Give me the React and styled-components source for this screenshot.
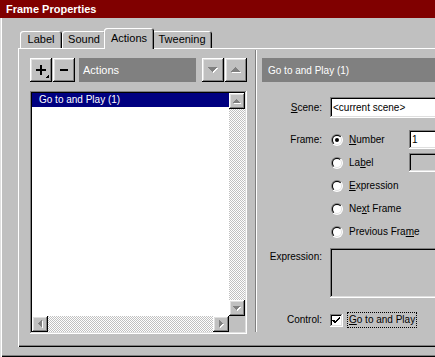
import React, { useId } from 'react';
import styled, { createGlobalStyle } from 'styled-components';

// Win98 bevels
const raised =
  'box-shadow: inset -1px -1px #000, inset 1px 1px #fff, inset -2px -2px #808080, inset 2px 2px #dfdfdf;';
const sunken =
  'box-shadow: inset -1px -1px #fff, inset 1px 1px #808080, inset -2px -2px #dfdfdf, inset 2px 2px #000;';

const GlobalStyle = createGlobalStyle`
  html, body {
    margin: 0;
    padding: 0;
    background: #c0c0c0;
    overflow: hidden;
  }
  body {
    font-family: "Liberation Sans", Arial, sans-serif;
    font-size: 10px;
    color: #000;
  }
`;

const tabs = [
  { name: 'Label', width: 42 },
  { name: 'Sound', width: 44 },
  { name: 'Actions', width: 50, active: true },
  { name: 'Tweening', width: 60 },
];

const frameOptions = [
  { pre: '', key: 'N', post: 'umber', checked: true, field: { value: '1', bg: '#fff' } },
  { pre: 'La', key: 'b', post: 'el', field: { value: '', bg: '#c0c0c0' } },
  { pre: '', key: 'E', post: 'xpression' },
  { pre: 'Ne', key: 'x', post: 't Frame' },
  { pre: 'Previous Fra', key: 'm', post: 'e' },
];

// Small disabled-looking triangle (gray with white emboss)
const Arrow = ({ dir, w = 7, h = 4 }) => {
  const horizontal = dir === 'left' || dir === 'right';
  const W = horizontal ? h : w;
  const H = horizontal ? w : h;
  const pts = {
    up: `${w / 2},0 ${w},${h} 0,${h}`,
    down: `0,0 ${w},0 ${w / 2},${h}`,
    left: `${h},0 ${h},${w} 0,${w / 2}`,
    right: `0,0 ${h},${w / 2} 0,${w}`,
  }[dir];
  return (
    <svg width={W + 1} height={H + 1} viewBox={`0 0 ${W + 1} ${H + 1}`} shapeRendering='crispEdges'>
      <polygon points={pts} fill='#fff' transform='translate(1 1)' />
      <polygon points={pts} fill='#808080' />
    </svg>
  );
};

const Radio = ({ checked }) => {
  const id = useId().replace(/:/g, '');
  return (
    <svg width='12' height='12' viewBox='0 0 12 12'>
      <defs>
        <linearGradient id={`o${id}`} x1='0' y1='0' x2='1' y2='1'>
          <stop offset='0.5' stopColor='#808080' />
          <stop offset='0.5' stopColor='#fff' />
        </linearGradient>
        <linearGradient id={`i${id}`} x1='0' y1='0' x2='1' y2='1'>
          <stop offset='0.5' stopColor='#000' />
          <stop offset='0.5' stopColor='#dfdfdf' />
        </linearGradient>
      </defs>
      <circle cx='6' cy='6' r='6' fill={`url(#o${id})`} />
      <circle cx='6' cy='6' r='5' fill={`url(#i${id})`} />
      <circle cx='6' cy='6' r='4' fill='#fff' />
      {checked && <circle cx='6' cy='6' r='2' fill='#000' />}
    </svg>
  );
};

const App = () => {
  return (
    <>
      <GlobalStyle />
      <Window>
        <TitleBar>Frame Properties</TitleBar>

        <TabStrip>
          {tabs.map((tab) => (
            <Tab key={tab.name} $active={tab.active} $width={tab.width}>
              {tab.name}
            </Tab>
          ))}
        </TabStrip>

        <Panel>
          <LeftColumn>
            <Toolbar>
              <ButtonPair>
                <ToolButton>
                  <svg width='22' height='24' viewBox='0 0 22 24' shapeRendering='crispEdges'>
                    <rect x='6' y='11' width='10' height='2' fill='#000' />
                    <rect x='10' y='7' width='2' height='10' fill='#000' />
                    <polygon points='19,16 19,20 15,20' fill='#000' />
                  </svg>
                </ToolButton>
                <ToolButton>
                  <svg width='22' height='24' viewBox='0 0 22 24' shapeRendering='crispEdges'>
                    <rect x='7' y='11' width='8' height='2' fill='#000' />
                  </svg>
                </ToolButton>
              </ButtonPair>
              <CaptionBar $size={11} $width={117}>
                Actions
              </CaptionBar>
              <ButtonPair>
                <ToolButton>
                  <Arrow dir='down' w={9} h={5} />
                </ToolButton>
                <ToolButton>
                  <Arrow dir='up' w={9} h={5} />
                </ToolButton>
              </ButtonPair>
            </Toolbar>

            <ListBox>
              <ListInner>
                <ListItems>
                  <ListRow $selected>Go to and Play (1)</ListRow>
                </ListItems>
                <VScroll>
                  <ScrollButton>
                    <Arrow dir='up' />
                  </ScrollButton>
                  <Track />
                  <ScrollButton>
                    <Arrow dir='down' />
                  </ScrollButton>
                </VScroll>
                <HScroll>
                  <ScrollButton>
                    <Arrow dir='left' />
                  </ScrollButton>
                  <Track />
                  <ScrollButton>
                    <Arrow dir='right' />
                  </ScrollButton>
                </HScroll>
                <Corner />
              </ListInner>
            </ListBox>
          </LeftColumn>

          <Divider />

          <RightColumn>
            <CaptionBar $size={10}>Go to and Play (1)</CaptionBar>

            <FormRow $top={15}>
              <FieldLabel $lh={21}>
                <Key>S</Key>cene:
              </FieldLabel>
              <TextField $height={21} $bg='#fff'>
                &lt;current scene&gt;
              </TextField>
            </FormRow>

            <FormRow $top={10}>
              <FieldLabel $lh={23}>Frame:</FieldLabel>
              <RadioGroup>
                {frameOptions.map((opt) => (
                  <RadioRow key={opt.post}>
                    <RadioOption $fixed={!!opt.field}>
                      <Radio checked={opt.checked} />
                      <span>
                        {opt.pre}
                        <Key>{opt.key}</Key>
                        {opt.post}
                      </span>
                    </RadioOption>
                    {opt.field && (
                      <TextField $height={19} $bg={opt.field.bg} $grow>
                        {opt.field.value}
                      </TextField>
                    )}
                  </RadioRow>
                ))}
              </RadioGroup>
            </FormRow>

            <FormRow $top={5}>
              <FieldLabel $lh={18}>Expression:</FieldLabel>
              <TextField $height={50} $bg='#c0c0c0' />
            </FormRow>

            <FormRow $top={14}>
              <FieldLabel $lh={16}>Control:</FieldLabel>
              <CheckRow>
                <CheckBox>
                  <svg width='13' height='13' viewBox='0 0 13 13' shapeRendering='crispEdges'>
                    <polyline points='3,6 5,8.5 10,3.5' fill='none' stroke='#000' strokeWidth='2' />
                  </svg>
                </CheckBox>
                <FocusLabel>
                  <Key>G</Key>o to and Play
                </FocusLabel>
              </CheckRow>
            </FormRow>
          </RightColumn>
        </Panel>
      </Window>
    </>
  );
};

// Styles
const Window = styled.div`
  width: 435px;
  height: 357px;
  overflow: hidden;
  background: #c0c0c0;
  display: flex;
  flex-direction: column;
  box-shadow: inset 1px 0 #dfdfdf, inset 2px 0 #fff, inset 0 -1px #000,
    inset 0 -2px #808080;
`;

const TitleBar = styled.div`
  height: 18px;
  flex: none;
  background: #800000;
  color: #fff;
  font-weight: bold;
  font-size: 11px;
  display: flex;
  align-items: center;
  padding-left: 6px;
`;

const TabStrip = styled.div`
  display: flex;
  flex: none;
  align-items: flex-start;
  height: 21px;
  margin-top: 10px;
  margin-bottom: -1px;
  padding-left: 20px;
  position: relative;
  z-index: 1;
`;

const Tab = styled.div`
  box-sizing: border-box;
  width: ${(p) => p.$width}px;
  height: ${(p) => (p.$active ? 21 : 17)}px;
  margin: ${(p) => (p.$active ? '0 -2px' : '3px 0 0')};
  position: relative;
  z-index: ${(p) => (p.$active ? 2 : 1)};
  background: #c0c0c0;
  border-radius: 3px 3px 0 0;
  box-shadow: inset 1px 1px #fff, inset -1px 0 #000, inset -2px 0 #808080;
  font-size: 11px;
  text-align: center;
  line-height: ${(p) => (p.$active ? 20 : 17)}px;
`;

const Panel = styled.div`
  width: 452px;
  height: 299px;
  flex: none;
  margin-left: 18px;
  padding: 10px 0 0 12px;
  box-sizing: border-box;
  display: flex;
  box-shadow: inset 1px 1px #fff, inset -1px -1px #000, inset -2px -2px #808080;
`;

const LeftColumn = styled.div`
  width: 217px;
  flex: none;
  display: flex;
  flex-direction: column;
`;

const Toolbar = styled.div`
  display: flex;
  height: 24px;
  gap: 4px;
  & > :last-child {
    margin-left: 2px;
  }
`;

const ButtonPair = styled.div`
  display: flex;
  gap: 1px;
`;

const ToolButton = styled.div`
  width: 22px;
  height: 24px;
  display: flex;
  align-items: center;
  justify-content: center;
  ${raised}
`;

const CaptionBar = styled.div`
  height: 24px;
  ${(p) => (p.$width ? `width: ${p.$width}px;` : '')}
  box-sizing: border-box;
  background: #808080;
  color: #fff;
  font-size: ${(p) => p.$size}px;
  display: flex;
  align-items: center;
  padding-left: ${(p) => (p.$width ? 4 : 6)}px;
`;

const ListBox = styled.div`
  margin-top: 9px;
  height: 243px;
  box-sizing: border-box;
  padding: 2px;
  background: #fff;
  ${sunken}
`;

const ListInner = styled.div`
  height: 100%;
  display: grid;
  grid-template-columns: 1fr 16px;
  grid-template-rows: 1fr 16px;
`;

const ListItems = styled.div`
  background: #fff;
`;

const ListRow = styled.div`
  height: 14px;
  line-height: 14px;
  padding-left: 7px;
  font-size: 10px;
  background: ${(p) => (p.$selected ? '#000080' : 'transparent')};
  color: ${(p) => (p.$selected ? '#fff' : '#000')};
`;

const VScroll = styled.div`
  display: flex;
  flex-direction: column;
`;

const HScroll = styled.div`
  display: flex;
`;

const ScrollButton = styled.div`
  width: 16px;
  height: 16px;
  flex: none;
  display: flex;
  align-items: center;
  justify-content: center;
  background: #c0c0c0;
  ${raised}
`;

const Track = styled.div`
  flex: 1;
  background-color: #c0c0c0;
  background-image: repeating-conic-gradient(#fff 0% 25%, #c0c0c0 0% 50%);
  background-size: 2px 2px;
`;

const Corner = styled.div`
  background: #c0c0c0;
`;

const Divider = styled.div`
  width: 2px;
  flex: none;
  margin: -8px 5px 15px 8px;
  box-shadow: inset 1px 0 #808080, inset -1px 0 #fff;
`;

const RightColumn = styled.div`
  width: 200px;
  flex: none;
  display: flex;
  flex-direction: column;
`;

const FormRow = styled.div`
  display: grid;
  grid-template-columns: 60px 1fr;
  column-gap: 8px;
  align-items: start;
  margin-top: ${(p) => p.$top}px;
`;

const FieldLabel = styled.div`
  text-align: right;
  line-height: ${(p) => p.$lh}px;
  font-size: 10px;
  white-space: nowrap;
`;

const Key = styled.span`
  text-decoration: underline;
`;

const TextField = styled.div`
  height: ${(p) => p.$height}px;
  line-height: ${(p) => p.$height}px;
  box-sizing: border-box;
  padding-left: 3px;
  background: ${(p) => p.$bg};
  font-size: 10px;
  white-space: nowrap;
  ${(p) => (p.$grow ? 'flex: 1;' : '')}
  ${sunken}
`;

const RadioGroup = styled.div`
  display: flex;
  flex-direction: column;
`;

const RadioRow = styled.div`
  height: 23px;
  display: flex;
  align-items: center;
`;

const RadioOption = styled.div`
  display: flex;
  align-items: center;
  gap: 6px;
  padding-left: 1px;
  white-space: nowrap;
  ${(p) => (p.$fixed ? 'flex: 0 0 78px;' : '')}
  svg {
    flex: none;
  }
`;

const CheckRow = styled.div`
  display: flex;
  align-items: center;
  height: 16px;
  gap: 4px;
`;

const CheckBox = styled.div`
  width: 13px;
  height: 13px;
  background: #fff;
  display: flex;
  ${sunken}
`;

const FocusLabel = styled.span`
  border: 1px dotted #000;
  padding: 0 1px;
  line-height: 14px;
  font-size: 10px;
`;

export default App;
